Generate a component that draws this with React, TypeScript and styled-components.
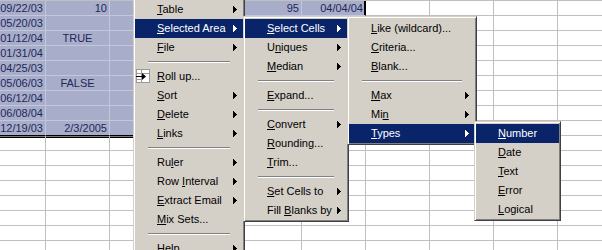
import * as React from 'react';

import styled, { createGlobalStyle, css } from 'styled-components';

type MenuEntry =
  | { sep: true }
  | { label: string; key: number; sub?: boolean; active?: boolean; icon?: boolean };

const SEP: MenuEntry = { sep: true };

const mainMenu: MenuEntry[] = [
  { label: 'Table', key: 0, sub: true },
  { label: 'Selected Area', key: 0, sub: true, active: true },
  { label: 'File', key: 0, sub: true },
  SEP,
  { label: 'Roll up...', key: 0, icon: true },
  { label: 'Sort', key: 0, sub: true },
  { label: 'Delete', key: 0, sub: true },
  { label: 'Links', key: 0, sub: true },
  SEP,
  { label: 'Ruler', key: 2, sub: true },
  { label: 'Row Interval', key: 4, sub: true },
  { label: 'Extract Email', key: 0, sub: true },
  { label: 'Mix Sets...', key: 0 },
  SEP,
  { label: 'Help', key: 0, sub: true },
];

const areaMenu: MenuEntry[] = [
  { label: 'Select Cells', key: 0, sub: true, active: true },
  { label: 'Uniques', key: 1, sub: true },
  { label: 'Median', key: 0, sub: true },
  SEP,
  { label: 'Expand...', key: 0 },
  SEP,
  { label: 'Convert', key: 0, sub: true },
  { label: 'Rounding...', key: 0 },
  { label: 'Trim...', key: 0 },
  SEP,
  { label: 'Set Cells to', key: 0, sub: true },
  { label: 'Fill Blanks by', key: 5, sub: true },
];

const cellsMenu: MenuEntry[] = [
  { label: 'Like (wildcard)...', key: 0 },
  { label: 'Criteria...', key: 0 },
  { label: 'Blank...', key: 0 },
  SEP,
  { label: 'Max', key: 0, sub: true },
  { label: 'Min', key: 2, sub: true },
  { label: 'Types', key: 0, sub: true, active: true },
];

const typesMenu: MenuEntry[] = [
  { label: 'Number', key: 0, active: true },
  { label: 'Date', key: 0 },
  { label: 'Text', key: 0 },
  { label: 'Error', key: 0 },
  { label: 'Logical', key: 0 },
];

type Align = 'left' | 'center' | 'right';
type CellData = { text: string; align: Align };

// row -> column -> content
const cellData: Record<number, Record<number, CellData>> = {
  0: {
    0: { text: '09/22/03', align: 'right' },
    1: { text: '10', align: 'right' },
    4: { text: '95', align: 'right' },
    5: { text: '04/04/04', align: 'right' },
  },
  1: { 0: { text: '05/20/03', align: 'right' } },
  2: { 0: { text: '01/12/04', align: 'right' }, 1: { text: 'TRUE', align: 'center' } },
  3: { 0: { text: '01/31/04', align: 'right' } },
  4: { 0: { text: '04/25/03', align: 'right' } },
  5: { 0: { text: '05/06/03', align: 'right' }, 1: { text: 'FALSE', align: 'center' } },
  6: { 0: { text: '06/12/04', align: 'right' } },
  7: { 0: { text: '06/08/04', align: 'right' } },
  8: { 0: { text: '12/19/03', align: 'right' }, 1: { text: '2/3/2005', align: 'right' } },
};

const ROWS = 17;
const COLS = 10;
const SEL_ROWS = 9;
const SEL_COLS = 6;

const Arrow = () => (
  <svg width="4" height="7" viewBox="0 0 4 7" shapeRendering="crispEdges">
    <path d="M0 0h1v7h-1z M1 1h1v5h-1z M2 2h1v3h-1z M3 3h1v1h-1z" fill="currentColor" />
  </svg>
);

const RollUpIcon = () => (
  <svg width="15" height="15" viewBox="0 0 15 15" shapeRendering="crispEdges">
    <rect x="0.5" y="0.5" width="13" height="13" fill="#fff" stroke="#9a9a9a" />
    <path d="M5.5 0.5v13 M0.5 4.5h13 M0.5 10.5h5" stroke="#9a9a9a" fill="none" />
    <path d="M0 7.5h8" stroke="#000" />
    <path d="M6 4l4 3.5l-4 3.5z" fill="#000" shapeRendering="auto" />
  </svg>
);

const Label = ({ text, k }: { text: string; k: number }) => (
  <span>
    {text.slice(0, k)}
    <u>{text[k]}</u>
    {text.slice(k + 1)}
  </span>
);

const PopupMenu = ({
  items,
  left,
  top,
  width,
}: {
  items: MenuEntry[];
  left: number;
  top: number;
  width: number;
}) => (
  <Menu $left={left} $top={top} $width={width}>
    {items.map((it, i) =>
      'sep' in it ? (
        <Separator key={i} />
      ) : (
        <MenuItem key={i} $active={!!it.active}>
          <Gutter>{it.icon && <RollUpIcon />}</Gutter>
          <Label text={it.label} k={it.key} />
          <SubMark>{it.sub && <Arrow />}</SubMark>
        </MenuItem>
      )
    )}
  </Menu>
);

const App = () => {
  const cells = [];
  for (let r = 0; r < ROWS; r++) {
    for (let c = 0; c < COLS; c++) {
      const d = cellData[r]?.[c];
      const sel = r < SEL_ROWS && c < SEL_COLS;
      cells.push(
        <Cell
          key={`${r}-${c}`}
          $sel={sel}
          $align={d ? d.align : 'left'}
          $edgeRight={sel && c === SEL_COLS - 1}
          $edgeBottom={sel && r === SEL_ROWS - 1}
          $belowEdge={r === SEL_ROWS && c < SEL_COLS}
        >
          {d ? d.text : ''}
        </Cell>
      );
    }
  }

  return (
    <>
      <GlobalStyle />
      <Sheet>
        <Grid>{cells}</Grid>
        <PopupMenu items={mainMenu} left={133} top={-3} width={112} />
        <PopupMenu items={areaMenu} left={243} top={16} width={106} />
        <PopupMenu items={cellsMenu} left={347} top={16} width={130} />
        <PopupMenu items={typesMenu} left={474} top={121} width={87} />
      </Sheet>
    </>
  );
};

//------------STYLED------------
const GlobalStyle = createGlobalStyle`
  html, body {
    margin: 0;
    padding: 0;
    background: #ffffff;
    overflow: hidden;
  }
`;

const Sheet = styled.div`
  position: relative;
  width: 602px;
  height: 250px;
  overflow: hidden;
  background: #ffffff;
`;

const Grid = styled.div`
  display: grid;
  grid-template-columns: repeat(${COLS}, 64px);
  grid-auto-rows: 15px;
  margin-left: -18px;
  border-top: 1px solid #c0c0c0;
  font-family: 'Liberation Sans', Arial, sans-serif;
  font-size: 11px;
`;

const Cell = styled.div<{
  $sel: boolean;
  $align: Align;
  $edgeRight: boolean;
  $edgeBottom: boolean;
  $belowEdge: boolean;
}>`
  box-sizing: border-box;
  padding: 1px 2px 0;
  line-height: 13px;
  white-space: nowrap;
  overflow: hidden;
  text-align: ${(p) => p.$align};
  color: #000000;
  border-right: 1px solid #c0c0c0;
  border-bottom: 1px solid #c0c0c0;

  ${(p) =>
    p.$sel &&
    css`
      background: #a8adca;
      color: #1e285a;
      border-right-color: #c4c7dc;
      border-bottom-color: #c4c7dc;
    `}
  ${(p) =>
    p.$edgeRight &&
    css`
      border-right-color: #000000;
      box-shadow: inset -1px 0 0 #000000;
    `}
  ${(p) =>
    p.$edgeBottom &&
    css`
      border-bottom-color: #000000;
    `}
  ${(p) =>
    p.$belowEdge &&
    css`
      box-shadow: inset 0 1px 0 #7a7a7a, inset 0 2px 0 #000000;
    `}
`;

const Menu = styled.div<{ $left: number; $top: number; $width: number }>`
  position: absolute;
  left: ${(p) => p.$left}px;
  top: ${(p) => p.$top}px;
  width: ${(p) => p.$width}px;
  box-sizing: border-box;
  display: flex;
  flex-direction: column;
  padding: 2px 1px 1px;
  background: #d4d0c8;
  border: 1px solid;
  border-color: #d4d0c8 #404040 #404040 #d4d0c8;
  box-shadow: inset 1px 1px 0 #ffffff, inset -1px -1px 0 #808080;
  font-family: 'Liberation Sans', Tahoma, Arial, sans-serif;
  font-size: 11px;
  color: #000000;
`;

const MenuItem = styled.div<{ $active: boolean }>`
  display: flex;
  align-items: center;
  height: 19px;
  line-height: 19px;
  white-space: nowrap;
  background: ${(p) => (p.$active ? '#0a246a' : 'transparent')};
  color: ${(p) => (p.$active ? '#ffffff' : '#000000')};

  span {
    flex: 1;
  }
`;

const Gutter = styled.div`
  width: 22px;
  flex: none;
  display: flex;
  align-items: center;
  padding-left: 1px;
  box-sizing: border-box;
`;

const SubMark = styled.div`
  width: 4px;
  margin-right: 6px;
  display: flex;
  align-items: center;
`;

const Separator = styled.div`
  height: 10px;
  margin: 0 13px;
  box-sizing: border-box;
  padding-top: 4px;

  &::before {
    content: '';
    display: block;
    height: 1px;
    background: #808080;
    border-bottom: 1px solid #ffffff;
  }
`;

export default App;
